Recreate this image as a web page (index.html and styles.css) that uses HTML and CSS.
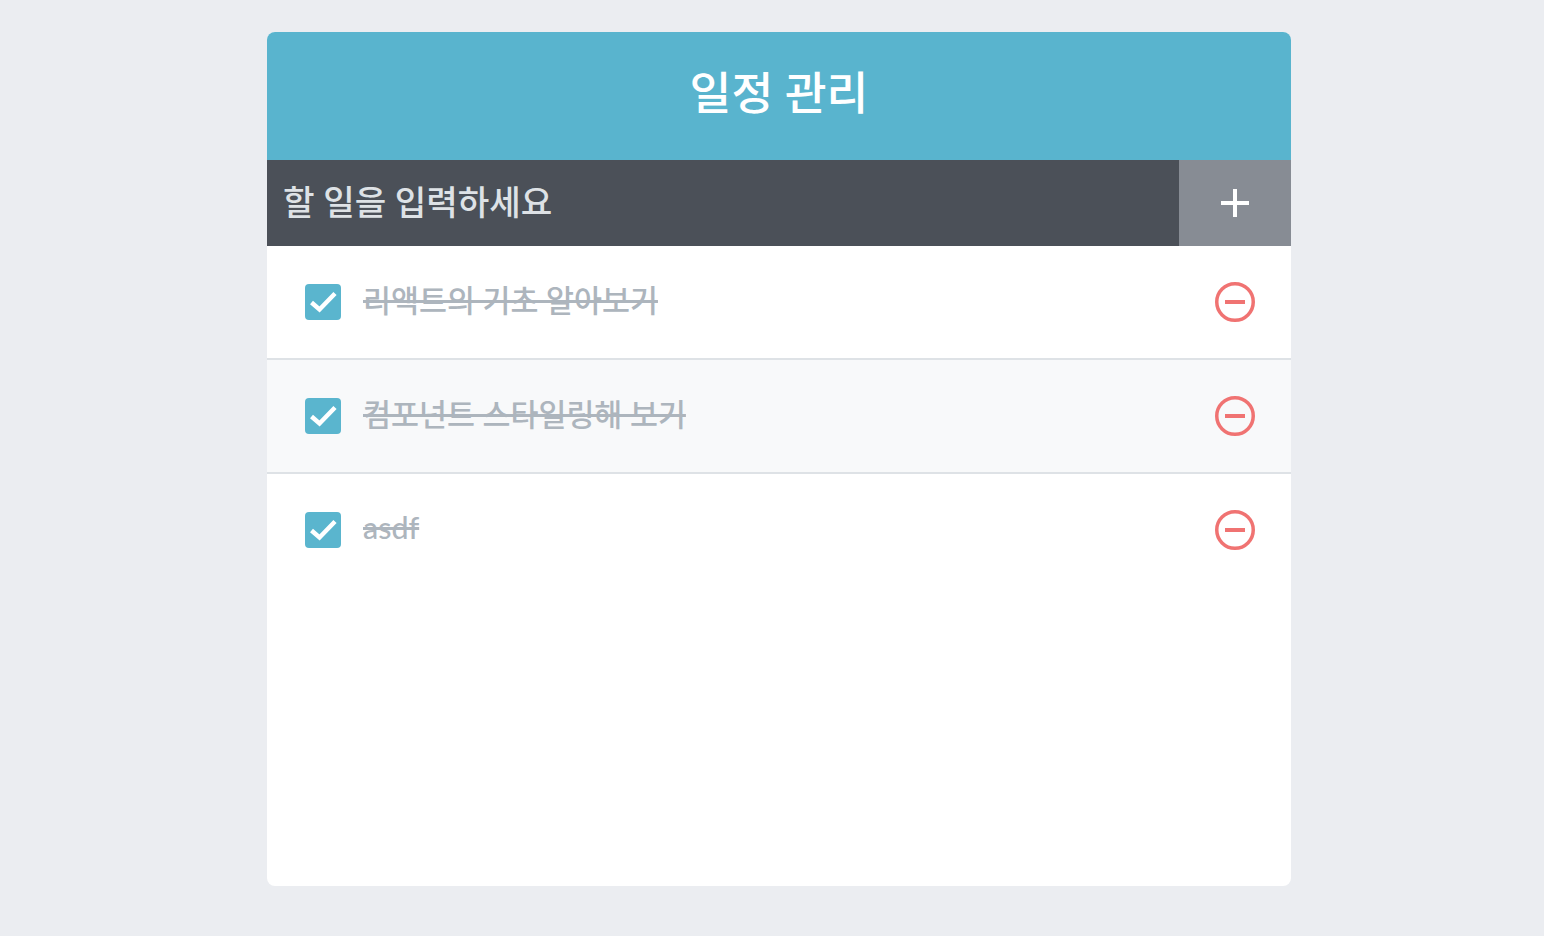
FILE: index.html
```html
<!DOCTYPE html>
<html lang="ko">
<head>
    <meta charset="UTF-8">
    <meta name="viewport" content="width=device-width, initial-scale=1.0">
    <title>일정 관리</title>
    <link rel="stylesheet" href="styles.css">
</head>
<body>

    <div class="todo-template">
        <div class="app-title">일정 관리</div>
        <div class="content">
            <form class="todo-insert">
                <input type="text" class="todo-input" placeholder="할 일을 입력하세요">
                <button type="submit" class="add-btn">
                    <svg width="32" height="32" viewBox="0 0 32 32"><path d="M2 16H30M16 2V30" stroke="#fff" stroke-width="4" fill="none"/></svg>
                </button>
            </form>
            <div class="todo-list">
                <div class="todo-item">
                    <div class="checkbox">
                        <svg class="check-icon" width="36" height="36" viewBox="0 0 36 36"><rect width="36" height="36" rx="4" fill="#5ab5ce"/><path d="M6.500 18.500L14.500 25.500L30 9.500" stroke="#fff" stroke-width="4.500" fill="none"/></svg>
                        <span class="todo-text">리액트의 기초 알아보기</span>
                    </div>
                    <div class="remove">
                        <svg width="40" height="40" viewBox="0 0 40 40"><circle cx="20" cy="20" r="18.250" stroke="#f07372" stroke-width="3.500" fill="none"/><rect x="10" y="18" width="20" height="4" fill="#f07372"/></svg>
                    </div>
                </div>
                <div class="todo-item">
                    <div class="checkbox">
                        <svg class="check-icon" width="36" height="36" viewBox="0 0 36 36"><rect width="36" height="36" rx="4" fill="#5ab5ce"/><path d="M6.500 18.500L14.500 25.500L30 9.500" stroke="#fff" stroke-width="4.500" fill="none"/></svg>
                        <span class="todo-text">컴포넌트 스타일링해 보기</span>
                    </div>
                    <div class="remove">
                        <svg width="40" height="40" viewBox="0 0 40 40"><circle cx="20" cy="20" r="18.250" stroke="#f07372" stroke-width="3.500" fill="none"/><rect x="10" y="18" width="20" height="4" fill="#f07372"/></svg>
                    </div>
                </div>
                <div class="todo-item">
                    <div class="checkbox">
                        <svg class="check-icon" width="36" height="36" viewBox="0 0 36 36"><rect width="36" height="36" rx="4" fill="#5ab5ce"/><path d="M6.500 18.500L14.500 25.500L30 9.500" stroke="#fff" stroke-width="4.500" fill="none"/></svg>
                        <span class="todo-text">asdf</span>
                    </div>
                    <div class="remove">
                        <svg width="40" height="40" viewBox="0 0 40 40"><circle cx="20" cy="20" r="18.250" stroke="#f07372" stroke-width="3.500" fill="none"/><rect x="10" y="18" width="20" height="4" fill="#f07372"/></svg>
                    </div>
                </div>
            </div>
        </div>
    </div>

</body>
</html>
```

FILE: styles.css
```css
/* General Body Styles */
body {
    margin: 0;
    background-color: #ebedf1;
    font-family: 'Lato', 'Noto Sans CJK KR', sans-serif;
}

/* Template */
.todo-template {
    width: 1024px;
    height: 854px;
    margin: 32px 0 0 267px;
    background: #fff;
    border-radius: 8px;
    overflow: hidden;
}

.app-title {
    height: 128px;
    box-sizing: border-box;
    padding-top: 29px;
    background: #59b4ce;
    color: #fff;
    font-size: 45.5px;
    font-weight: 500;
    line-height: 64px;
    text-align: center;
}

/* Insert Form */
.todo-insert {
    display: flex;
    height: 86px;
    background-color: #4b5058;
}

.todo-input {
    flex: 1;
    min-width: 0;
    padding: 0 16px 4px;
    border: none;
    outline: none;
    background: none;
    color: #fff;
    font-family: inherit;
    font-size: 34.25px;
    font-weight: 500;
}

.todo-input::placeholder {
    color: #dee2e6;
}

.add-btn {
    display: flex;
    width: 112px;
    align-items: center;
    justify-content: center;
    padding: 0;
    border: none;
    background: #878c94;
}

/* List */
.todo-item {
    display: flex;
    height: 112px;
    align-items: center;
    padding: 0 36px 0 38px;
}

.todo-item:nth-child(even) {
    background: #f8f9fa;
}

.todo-item + .todo-item {
    border-top: 2px solid #dee2e6;
}

.checkbox {
    display: flex;
    flex: 1;
    align-items: center;
}

.check-icon {
    margin-right: 22px;
}

.todo-text {
    padding-bottom: 7px;
    color: #adb5bd;
    font-size: 30.4px;
    font-weight: 500;
    text-decoration: line-through;
}

.remove {
    display: flex;
    width: 40px;
    height: 40px;
}
```
